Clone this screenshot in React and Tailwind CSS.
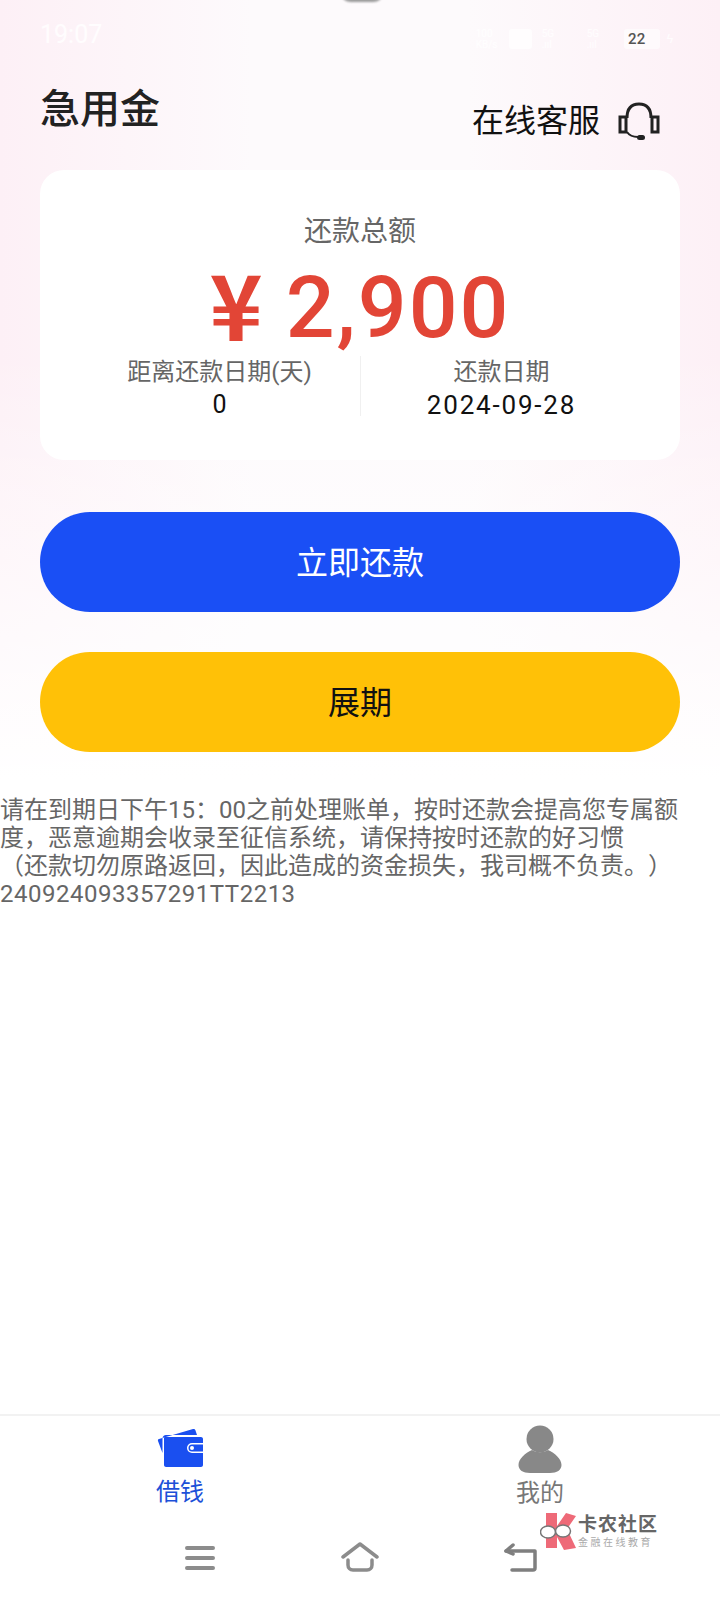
const font = { fontFamily: '"Roboto", "Noto Sans CJK SC", sans-serif' }

function Headset() {
  return (
    <svg width="42" height="38" viewBox="0 0 42 38" fill="none" stroke="#222" strokeWidth="3">
      <rect x="2" y="15" width="6" height="15" />
      <rect x="34" y="15" width="6" height="15" />
      <path d="M9 16C9 6 14 2 21 2s12 4 12 14" />
      <path d="M9 30c2 3 6 5 11 5" strokeWidth="2" />
      <rect x="19" y="33" width="8" height="5" rx="2.5" fill="#222" stroke="none" />
    </svg>
  )
}

function Wallet() {
  return (
    <svg width="46" height="40" viewBox="0 0 46 40">
      <path d="M2 11 36 1c1-.3 2 .2 2.400 1.200L40 7H9c-2 0-3.500 1.500-3.500 3.500V25L1 13c-.3-1 0-1.700 1-2z" fill="#1a4ff0" />
      <path d="M8 9h36c1 0 2 .8 2 2v4H35a5 5 0 0 0 0 10h11v12c0 1.200-1 2-2 2H9c-1 0-2-.8-2-2V10c0-.5.500-1 1-1z" fill="#1a4ff0" />
      <path d="M35 16.500h11v7H35a3.500 3.500 0 0 1 0-7z" fill="#1a4ff0" />
      <circle cx="35" cy="20" r="2" fill="#fff" />
    </svg>
  )
}

function Person() {
  return (
    <svg width="44" height="48" viewBox="0 0 44 48" fill="#888">
      <circle cx="22" cy="14" r="13.500" />
      <path d="M14 25c-7 3-13.500 9-13.500 15C.5 45 5 48 12 48h20c7 0 11.500-3 11.500-8 0-6-6.500-12-13.500-15-5 3-11 3-16 0z" />
    </svg>
  )
}

function NavBar() {
  return (
    <div className="flex h-[78px] items-start justify-between pl-[185px] pr-[182px] pt-[23px]">
      <svg width="30" height="26" viewBox="0 0 30 26" stroke="#8c8c8c" strokeWidth="4" strokeLinecap="round">
        <path d="M2 3h26M2 13h26M2 23h26" />
      </svg>
      <svg width="38" height="30" viewBox="0 0 38 30" fill="none" stroke="#8c8c8c" strokeWidth="3.500" strokeLinecap="round" strokeLinejoin="round" className="mt-[-3px]">
        <path d="M2 15 19 2l17 13" />
        <path d="M7 18v5c0 3 2 5 5 5h14c3 0 5-2 5-5v-5" />
      </svg>
      <svg width="34" height="30" viewBox="0 0 34 30" fill="none" stroke="#7f7f7f" strokeWidth="3.500" strokeLinecap="round" strokeLinejoin="round" className="mt-[-2px]">
        <path d="M2 8h29v17c0 1-.5 2-2 2H8" />
        <path d="M9 2 2 8l7 3" />
      </svg>
    </div>
  )
}

export default function App() {
  return (
    <div style={font} className="relative flex h-[1600px] w-[720px] flex-col overflow-hidden bg-white">
      <div className="absolute left-[340px] top-[-20px] h-[22px] w-[44px] rounded-full bg-[#9a9a9a] blur-[1px]" />

      <div className="bg-[linear-gradient(to_bottom,rgba(255,255,255,0)_0%,rgba(255,255,255,0)_45%,#ffffff_100%),linear-gradient(to_right,#fdf0f6_0%,#fdfafc_35%,#fdfafc_65%,#fdf0f6_100%)] px-[40px] pb-[28px]">
        {/* status bar, nearly invisible on the pink */}
        <div className="flex h-[60px] items-end justify-between pb-[10px]">
          <span className="text-[25px] leading-[30px] text-white/80">19:07</span>
          <div className="mr-[7px] flex items-center">
            <span className="w-[33px] text-[10px] leading-[11px] text-white/80">100<br />KB/s</span>
            <span className="h-[20px] w-[23px] rounded-[3px] bg-white/70" />
            <span className="ml-[10px] w-[40px] text-[10px] leading-[11px] text-white/80">5G<br />.ııl</span>
            <span className="ml-[5px] w-[37px] text-[10px] leading-[11px] text-white/80">5G<br />.ııl</span>
            <span className="flex h-[20px] w-[36px] items-center justify-center rounded-[3px] bg-white/60 pr-[10px] text-[15px] font-medium text-[#555]">22</span>
            <span className="ml-[7px] text-[12px] text-white/80">ϟ</span>
          </div>
        </div>

        <div className="flex items-start justify-between">
          <h1 className="mt-[26px] mb-[-2px] text-[40px] font-medium leading-[48px] text-[#222]">急用金</h1>
          <div className="mt-[39px] mr-[20px] flex items-center gap-[18px]">
            <span className="text-[32px] leading-[44px] text-[#111]">在线客服</span>
            <Headset />
          </div>
        </div>

        <div className="mt-[27px] flex h-[290px] flex-col items-center rounded-[24px] bg-white pt-[45px]">
          <div className="text-[28px] leading-[34px] text-[#666]">还款总额</div>
          <div className="mt-[18px] flex h-[82px] items-center text-[86px] font-medium leading-[82px] tracking-[2px] text-[#e24536]">
            <span className="mb-[12px] mr-[21px] h-[70px] font-['Noto_Sans_CJK_SC'] text-[90px] font-semibold leading-[70px]">¥</span>
            <span>2,900</span>
          </div>
          <div className="mt-[7px] flex h-[60px] w-full items-stretch">
            <div className="flex flex-1 flex-col items-center pl-[39px]">
              <span className="text-[24px] leading-[32px] text-[#666]">距离还款日期(天)</span>
              <span className="mt-[2px] text-[25px] leading-[30px] text-[#111]">0</span>
            </div>
            <div className="w-px bg-[#f0f0f0]" />
            <div className="flex flex-1 flex-col items-center pr-[38px]">
              <span className="text-[24px] leading-[32px] text-[#666]">还款日期</span>
              <span className="mt-[2px] text-[26px] tracking-[1.800px] leading-[30px] text-[#111]">2024-09-28</span>
            </div>
          </div>
        </div>

        <button className="mt-[52px] flex h-[100px] w-full items-center justify-center rounded-full bg-[#1a4ff5] pt-[2px] text-[32px] text-white">立即还款</button>
        <button className="mt-[40px] flex h-[100px] w-full items-center justify-center rounded-full bg-[#ffc107] pt-[2px] text-[32px] text-[#111]">展期</button>
      </div>

      <p className="mt-[16px] text-[24px] leading-[28px] text-[#666] [text-spacing-trim:space-all]">
        请在到期日下午15：00之前处理账单，按时还款会提高您专属额度，恶意逾期会收录至征信系统，请保持按时还款的好习惯<br />（还款切勿原路返回，因此造成的资金损失，我司概不负责。）<br /><span className="tracking-[0.500px]">240924093357291TT2213</span>
      </p>

      <div className="mt-auto border-t-2 border-[#f2f2f2]">
        <div className="flex h-[106px] justify-between pl-[145px] pr-[145px] pt-[12px]">
          <div className="flex w-[70px] flex-col items-center">
            <Wallet />
            <span className="mt-[9px] text-[24px] leading-[30px] text-[#1c50d8]">借钱</span>
          </div>
          <div className="mt-[-3px] flex w-[70px] flex-col items-center">
            <Person />
            <span className="mt-[5px] text-[24px] leading-[30px] text-[#777]">我的</span>
          </div>
        </div>
        <NavBar />
      </div>

      {/* watermark */}
      <div className="absolute left-[540px] top-[1512px] flex items-center">
        <svg width="38" height="38" viewBox="0 0 38 38">
          <path d="M6 1h11v13l9-13 10 3-9 13 9 19-12 2-7-13v11H6z" fill="#ee6a78" />
          <ellipse cx="8" cy="20" rx="7.500" ry="6" fill="#fff" stroke="#777" strokeWidth="1.500" />
          <ellipse cx="23" cy="19" rx="7.500" ry="6" fill="#fff" stroke="#777" strokeWidth="1.500" />
        </svg>
        <div className="flex flex-col">
          <span className="text-[19px] font-bold leading-[22px] tracking-[1px] text-[#666]">卡农社区</span>
          <span className="text-[10px] leading-[13px] tracking-[2.500px] text-[#aaa]">金融在线教育</span>
        </div>
      </div>
    </div>
  )
}
